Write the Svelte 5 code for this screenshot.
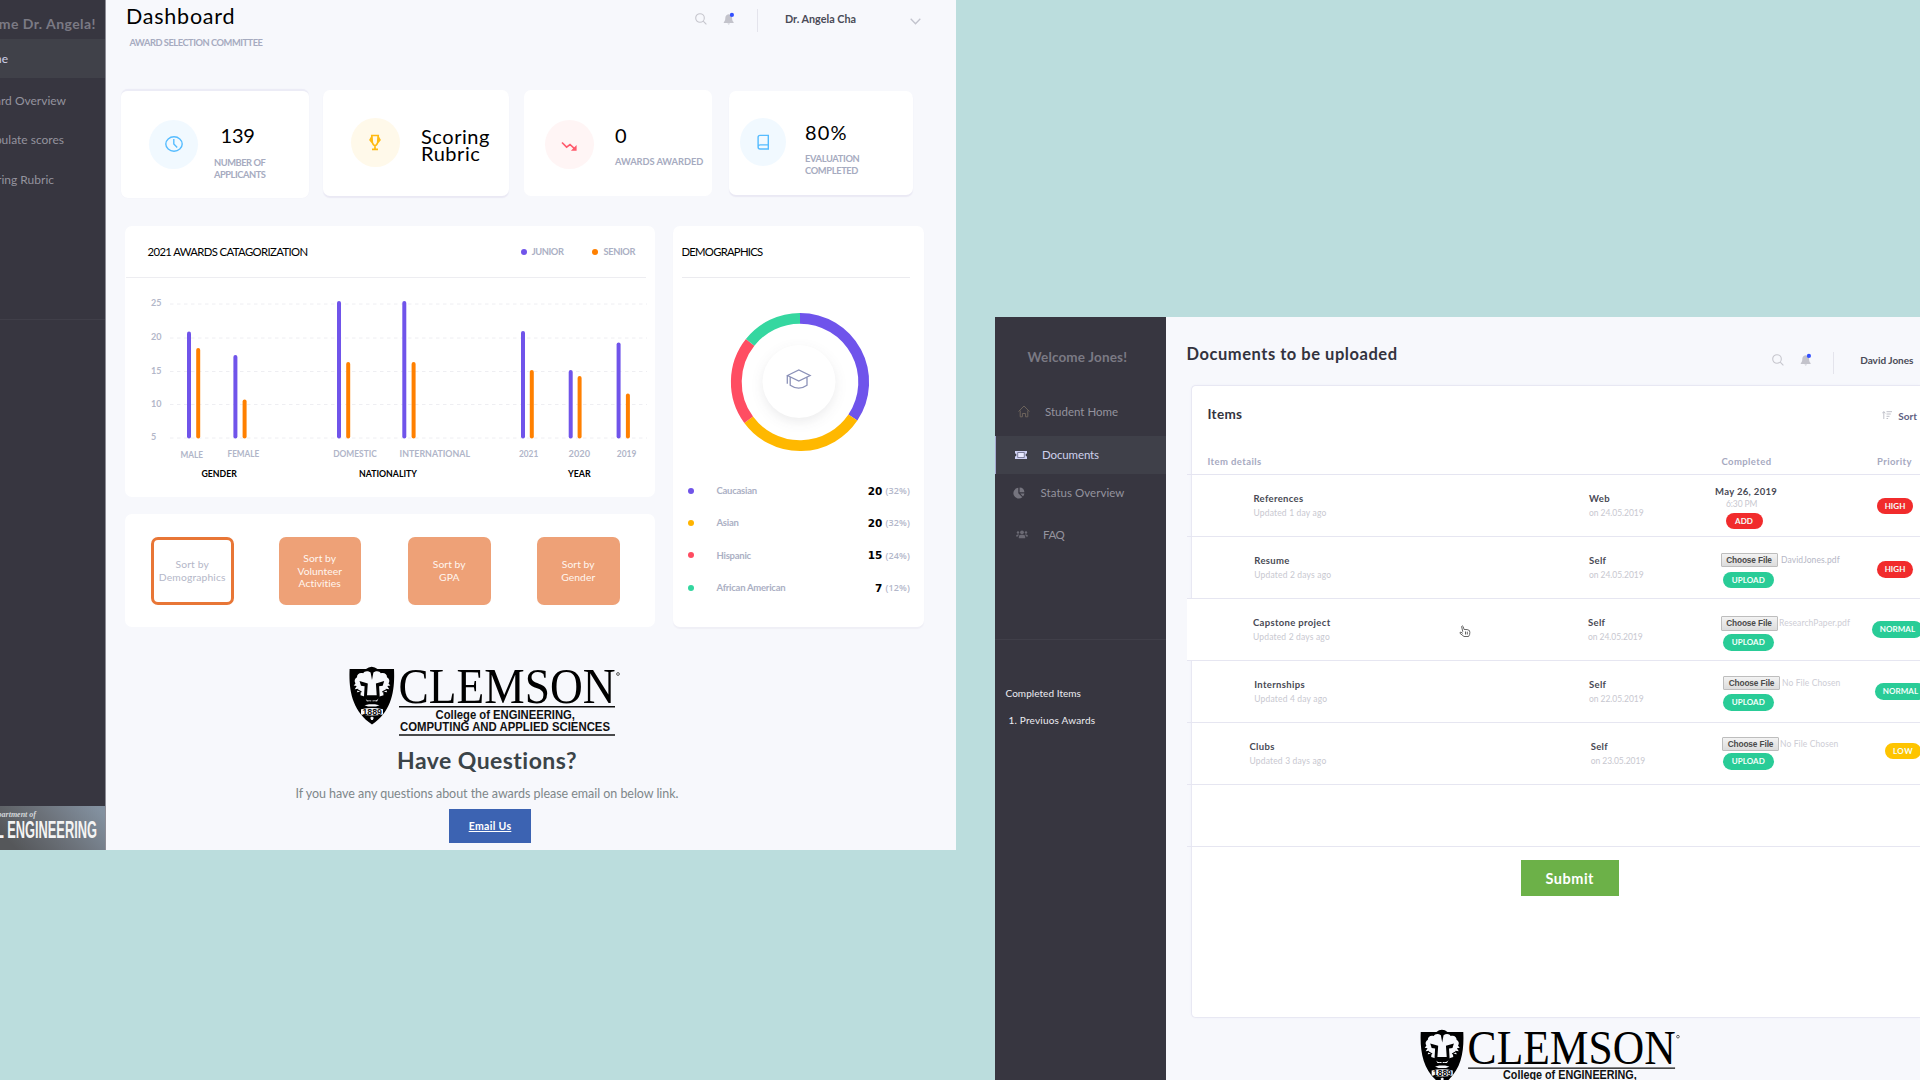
<script>
  const adminNav = ['Award Overview', 'Tabulate scores', 'Scoring Rubric'];

  const axis = [
    { v: 25, y: 78 }, { v: 20, y: 112 }, { v: 15, y: 145.5 }, { v: 10, y: 178.5 }, { v: 5, y: 212 }
  ];
  const bars = [
    { x: 64, top: 105.5, kind: 'junior' }, { x: 73.2, top: 122, kind: 'senior' },
    { x: 110.4, top: 129, kind: 'junior' }, { x: 119.6, top: 173.5, kind: 'senior' },
    { x: 214, top: 75, kind: 'junior' }, { x: 223.2, top: 136, kind: 'senior' },
    { x: 279.3, top: 75, kind: 'junior' }, { x: 288.6, top: 136, kind: 'senior' },
    { x: 398, top: 105, kind: 'junior' }, { x: 406.8, top: 144, kind: 'senior' },
    { x: 445.7, top: 144, kind: 'junior' }, { x: 454.6, top: 150, kind: 'senior' },
    { x: 493.6, top: 116.5, kind: 'junior' }, { x: 502.9, top: 167.5, kind: 'senior' }
  ];
  const groups = [
    { t: 'MALE', x: 55.4, y: 232, w: 22.5 }, { t: 'FEMALE', x: 102.5, y: 231, w: 31.8 },
    { t: 'DOMESTIC', x: 208.2, y: 231, w: 43.6 }, { t: 'INTERNATIONAL', x: 274.6, y: 231, w: 70.4 },
    { t: '2021', x: 394, y: 231, w: 19.2 }, { t: '2020', x: 443.6, y: 231, w: 21.4 }, { t: '2019', x: 491.8, y: 231, w: 19.6 }
  ];
  const titles = [
    { t: 'GENDER', x: 76.4, w: 35.4 }, { t: 'NATIONALITY', x: 234, w: 58 }, { t: 'YEAR', x: 443, w: 22.7 }
  ];

  const people = [
    { name: 'Caucasian', n: 20, pct: 32, color: '#7054e8' },
    { name: 'Asian', n: 20, pct: 32, color: '#ffb400' },
    { name: 'Hispanic', n: 15, pct: 24, color: '#ff4c61' },
    { name: 'African American', n: 7, pct: 12, color: '#33d69f' }
  ];
  const arcs = [
    { from: 0, to: 123.9, color: '#6f54eb' },
    { from: 123.9, to: 233.7, color: '#ffb800' },
    { from: 233.7, to: 308.5, color: '#ff4d62' },
    { from: 308.5, to: 360, color: '#35d7a0' }
  ];
  const R = 63.7;
  function point(deg) {
    const a = ((deg - 90) * Math.PI) / 180;
    return `${70 + R * Math.cos(a)} ${70 + R * Math.sin(a)}`;
  }

  const docs = [
    { name: 'References', ago: '1 day', x: 66.5, src: 'Web', date: '24.05.2019', sx: 402, pri: 'HIGH', px: 690, py: 23 },
    { name: 'Resume', ago: '2 days', x: 67.3, src: 'Self', date: '24.05.2019', sx: 402, file: 'DavidJones.pdf', fx: 0.5, fy: 16, gap: 4.5, sep: 3.5, tone: 'dark', pri: 'HIGH', px: 690, py: 24.5 },
    { name: 'Capstone project', ago: '2 days', x: 66, src: 'Self', date: '24.05.2019', sx: 401, file: 'ResearchPaper.pdf', fx: 0.5, fy: 17.5, gap: 3.5, sep: 1.5, pri: 'NORMAL', px: 685, py: 22.5 },
    { name: 'Internships', ago: '4 day', x: 67.3, src: 'Self', date: '22.05.2019', sx: 402, file: 'No File Chosen', fx: 3, fy: 15, gap: 4, sep: 2, pri: 'NORMAL', px: 688, py: 22.5 },
    { name: 'Clubs', ago: '3 days', x: 62.5, src: 'Self', date: '23.05.2019', sx: 403.7, file: 'No File Chosen', fx: 2, fy: 14, gap: 2, sep: 1, pri: 'LOW', px: 698, py: 20 }
  ];
</script>

{#snippet logo()}
  <svg class="logo" viewBox="0 0 272 72" aria-label="Clemson College of Engineering, Computing and Applied Sciences">
    <path d="M.6 3H17q2.500-2 5.700-2.200Q26 1 28.500 3h16.500C46 24 43 45 23 58.500 3 45-.4 24 .6 3Z" fill="#000" />
    <path d="M21.600 6.500 23 14l1.400-7.500c3-2.300 6.500-1.300 7.400.8 3.300-1.300 6.400.9 6.200 3.900 2.500 1.200 3 4.200 1.500 6.200l1.800 2.200-3 .4 2 3.200-3.600-.5 1.500 3.600-4-.6.3 3.500-4 1.300-2.500 5h-10l-2.500-5-4-1.300.3-3.500-4 .6 1.500-3.600-3.600.5 2-3.200-3-.4 1.800-2.200c-1.500-2-1-5 1.500-6.200-.2-3 2.900-5.200 6.200-3.900.9-2.100 4.400-3.100 7.400-.8Z" fill="#f7f8fc" />
    <path d="m10.500 15 8.300 2.600-.8 11.600h9.700l-.8-11.600 8.300-2.600-1.500 4.700-3.600.6.700 11.800-3.800 2.400h-8.300l-3.800-2.400.7-11.800-3.600-.6Z" fill="#000" />
    <path d="M8 23.500l4.500 2.500M37.800 23.500l-4.500 2.500M22.900 33.500v3M16 36.800l4.500-.9 2.400.6 2.400-.6 4.500.9" stroke="#000" stroke-width="1.200" fill="none" />
    <path d="M15.500 39.200q2.700-.3 4.500-1h6q1.800.7 4.500 1l-3.500 1.400H19Z" fill="#f7f8fc" />
    <path d="M12 43.200q11-2.500 22 0v5.300q-11 2-22 0Z" fill="#f7f8fc" />
    <text x="13.500" y="48.600" textLength="19.500" lengthAdjust="spacingAndGlyphs" class="year">1889</text>
    <path d="m21.200 51.800 1.800-1.300 1.800 1.300-1 2.200h-1.600Z" fill="#f7f8fc" />
    <text x="49.500" y="37" textLength="217" lengthAdjust="spacingAndGlyphs" class="wordmark">CLEMSON</text>
    <circle cx="269" cy="8" r="1.400" fill="none" stroke="#333" stroke-width=".8" />
    <path d="M50 40.800h216M50 69h216" stroke="#111" stroke-width="1.500" />
    <text x="86.500" y="52.500" textLength="139.500" lengthAdjust="spacingAndGlyphs" class="school">College of ENGINEERING,</text>
    <text x="51" y="65" textLength="210" lengthAdjust="spacingAndGlyphs" class="school">COMPUTING AND APPLIED SCIENCES</text>
  </svg>
{/snippet}

{#snippet searchIcon()}
  <svg class="search" viewBox="0 0 12 12"><circle cx="5" cy="5" r="4.300" /><path d="m8.200 8.200 3.200 3.200" /></svg>
{/snippet}

{#snippet bellIcon()}
  <svg class="bell" viewBox="0 0 13 14">
    <path d="M5.500 2.200c-2.300.4-3.200 2-3.200 4 0 2-.6 3-1.500 3.800v1h9.800v-1c-.9-.8-1.500-1.800-1.500-3.800 0-2-1-3.600-3.600-4ZM4.400 11.600q1.300 2 2.600 0Z" fill="#c3c3cb" />
    <circle cx="8.900" cy="2.900" r="2.100" fill="#3350ff" />
  </svg>
{/snippet}

<div class="desktop">
  <section class="window admin">
    <aside>
      <h2>Welcome Dr. Angela!</h2>
      <a class="active" href="#home">Home</a>
      {#each adminNav as item}<a href="#{item}">{item}</a>{/each}
      <hr />
      <svg class="dept" viewBox="0 0 105 44">
        <defs>
          <linearGradient id="steel" x1="0" y1=".6" x2="1" y2=".2">
            <stop offset="0" stop-color="#55575a" /><stop offset=".5" stop-color="#6c727a" /><stop offset="1" stop-color="#8391a0" />
          </linearGradient>
        </defs>
        <rect width="105" height="44" fill="url(#steel)" />
        <text x="36" y="11" text-anchor="end" class="dep">Department of</text>
        <text x="97" y="32" text-anchor="end" textLength="126" lengthAdjust="spacingAndGlyphs" class="eng">CIVIL ENGINEERING</text>
      </svg>
    </aside>

    <main>
      <header>
        <div>
          <h1>Dashboard</h1>
          <p class="cap">AWARD SELECTION COMMITTEE</p>
        </div>
        <div class="tools">
          {@render searchIcon()}
          {@render bellIcon()}
          <i class="rule"></i>
          <span class="user">Dr. Angela Cha</span>
          <svg class="chev" viewBox="0 0 11 7"><path d="m.7.8 4.800 5 4.800-5" /></svg>
        </div>
      </header>

      <div class="stats">
        <article class="card one">
          <div class="disc blue">
            <svg viewBox="0 0 20 20" width="20" height="20"><ellipse cx="10" cy="10" rx="8.200" ry="7.200" /><path d="M9.800 5v5l3.400 3.600" /></svg>
          </div>
          <div class="info"><strong>139</strong><span class="cap">NUMBER OF<br />APPLICANTS</span></div>
        </article>
        <article class="card two">
          <div class="disc gold">
            <svg viewBox="0 0 20 20" width="20" height="20"><path d="M6.800 3.500h6.400l-.5 7q-.7 2.500-2.700 3.500-2-1-2.700-3.500ZM6.800 5l-1.700 3 2.200 2.800M13.200 5l1.700 3-2.200 2.800M10 14v3.200M7 17.400h6" /></svg>
          </div>
          <div class="info"><strong>Scoring<br />Rubric</strong></div>
        </article>
        <article class="card three">
          <div class="disc rose">
            <svg viewBox="0 0 20 20" width="20" height="20"><path d="m3 7.500 4.600 4.600 3.400-2.600 5 4.700M13.800 15h3v-3Z" /></svg>
          </div>
          <div class="info"><strong>0</strong><span class="cap">AWARDS AWARDED</span></div>
        </article>
        <article class="card four">
          <div class="disc blue">
            <svg viewBox="0 0 20 20" width="20" height="20"><path d="M15.300 17H7q-1.900 0-1.900-2V5.300q0-1.900 1.900-1.900h8.300ZM5.200 14.500q.2-1.600 2-1.600h8" /></svg>
          </div>
          <div class="info"><strong>80%</strong><span class="cap">EVALUATION<br />COMPLETED</span></div>
        </article>
      </div>

      <div class="panels">
        <div class="left">
          <section class="panel chart">
            <div class="head">
              <h3>2021 AWARDS CATAGORIZATION</h3>
              <span class="key junior">JUNIOR</span>
              <span class="key senior">SENIOR</span>
            </div>
            <svg viewBox="0 51 530 219" width="530" height="219">
              <path d="M1 51.500h520" stroke="#ededf1" stroke-width="1.200" />
              {#each axis as a}
                <path d="M45 {a.y}h477" stroke="#eeeef2" stroke-dasharray="3.500 3.500" />
                <text x="26" y={a.y + 2.2} class="tick">{a.v}</text>
              {/each}
              {#each bars as b}
                <rect x={b.x - 2} y={b.top} width="4" height={212.5 - b.top} rx="2" fill={b.kind === 'junior' ? '#7054ea' : '#ff8000'} />
              {/each}
              {#each groups as g}
                <text x={g.x} y={g.y} textLength={g.w} lengthAdjust="spacingAndGlyphs" class="group">{g.t}</text>
              {/each}
              {#each titles as g}
                <text x={g.x} y="251" textLength={g.w} lengthAdjust="spacingAndGlyphs" class="group strong">{g.t}</text>
              {/each}
            </svg>
          </section>
          <section class="panel sorts">
            <button class="on">Sort by<br />Demographics</button>
            <button class="s2">Sort by<br />Volunteer<br />Activities</button>
            <button class="s3">Sort by<br />GPA</button>
            <button class="s4">Sort by<br />Gender</button>
          </section>
        </div>

        <section class="panel demo">
          <h3>DEMOGRAPHICS</h3>
          <div class="donut">
            <svg viewBox="0 0 140 140" width="140" height="140">
              {#each arcs as a}
                <path d="M{point(a.from)}A{R} {R} 0 0 1 {point(a.to)}" stroke={a.color} stroke-width="10.800" fill="none" />
              {/each}
              <circle class="hub" cx="69" cy="69.500" r="36.500" />
              <path d="m57.500 63.500 11.300-5.600 11.300 5.600-11.300 5.600ZM60.200 65v8.200q8.500 5.800 16.800 0V65M57.300 63.500v8.300" stroke="#8b91b8" stroke-width="1.300" fill="none" />
            </svg>
          </div>
          <ul>
            {#each people as p}
              <li>
                <svg width="6" height="6"><circle cx="3" cy="3" r="3" fill={p.color} /></svg>
                <span class="name">{p.name}</span>
                <b>{p.n}</b><span class="pct">({p.pct}%)</span>
              </li>
            {/each}
          </ul>
        </section>
      </div>

      <footer>
        {@render logo()}
        <h2>Have Questions?</h2>
        <p>If you have any questions about the awards please email on below link.</p>
        <a href="#mail">Email Us</a>
      </footer>
    </main>
  </section>

  <section class="window student">
    <aside>
      <h2>Welcome Jones!</h2>
      <a class="n1" href="#home">
        <svg viewBox="0 0 12 13" width="12" height="13"><path d="M.6 6.500 6 1l5.400 5.500M2.200 5.500v6.300h2.200V8.500h3.200v3.300h2.200V5.500" fill="none" stroke="#6d645c" /></svg>
        <span>Student Home</span>
      </a>
      <a class="n2 active" href="#documents">
        <svg viewBox="0 0 12 8" width="12" height="8"><path d="M0 0h12v2.600a1.400 1.400 0 0 0 0 2.800V8H0V5.400a1.400 1.400 0 0 0 0-2.800Z" fill="#cfd1f3" /><path d="M2.700 1.500h6.600v5H2.700Z" fill="#e9eaff" stroke="#555873" stroke-width=".7" /></svg>
        <span>Documents</span>
      </a>
      <a class="n3" href="#status">
        <svg viewBox="0 0 12 12" width="12" height="12"><path d="M5.300.8v5.500l4 4A5.400 5.400 0 1 1 5.300.8ZM6.600.6a5 5 0 0 1 4.800 4.700H6.600ZM7.200 6.500h4.200a5 5 0 0 1-1.400 3Z" fill="#75747e" /></svg>
        <span>Status Overview</span>
      </a>
      <a class="n4" href="#faq">
        <svg viewBox="0 0 12 9" width="12" height="9"><g fill="#6b6a74"><circle cx="6" cy="2.300" r="1.900" /><circle cx="2" cy="2.500" r="1.200" /><circle cx="10" cy="2.500" r="1.200" /><path d="M2.800 8.300V7q0-2.200 2-2.200h2.400q2 0 2 2.200v1.300ZM0 6.500q0-2 1.600-2h1.600Q2 5.400 2 6.500ZM12 6.500q0-2-1.600-2H8.800q1.200.9 1.200 2Z" /></g></svg>
        <span>FAQ</span>
      </a>
      <hr />
      <p>Completed Items</p>
      <p class="second">1. Previuos Awards</p>
    </aside>

    <main>
      <header>
        <h1>Documents to be uploaded</h1>
        <div class="tools">
          {@render searchIcon()}
          {@render bellIcon()}
          <i class="rule"></i>
          <span class="user">David Jones</span>
        </div>
      </header>

      <section class="sheet">
        <div class="top">
          <h3>Items</h3>
          <span class="sort">
            <svg viewBox="0 0 11 8" width="11" height="8"><path d="M1.800 8V.8M.3 2.300 1.800.6l1.500 1.700M4.500.7H10M4.500 3h4.300M4.500 5.300h3M4.500 7.500h1.600" fill="none" stroke="#bfc0c9" /></svg>
            Sort
          </span>
        </div>
        <div class="cols">
          <span>Item details</span><span>Completed</span><span>Priority</span>
        </div>
        {#each docs as d, i}
          <div class="row" class:hover={i === 2}>
            <div class="cell what" style:padding-left="{d.x}px"><b>{d.name}</b><small>Updated {d.ago} ago</small></div>
            <div class="cell" style:padding-left="{d.sx - 401}px"><b>{d.src}</b><small class="date">on {d.date}</small></div>
            <div class="files" class:dated={!d.file} style:padding-top="{d.fy ?? 10}px">
              {#if d.file}
                <div class="pick" style:padding-left="{d.fx}px" style:gap="{d.sep}px">
                  <button>Choose File</button><span class={d.tone}>{d.file}</span>
                </div>
                <span class="pill up" style:margin-top="{d.gap}px">UPLOAD</span>
              {:else}
                <b>May 26, 2019</b>
                <small>6:30 PM</small>
                <span class="pill high">ADD</span>
              {/if}
            </div>
            <div class="prio" style:padding-left="{d.px - 685}px" style:padding-top="{d.py}px">
              <span class="pill {d.pri.toLowerCase()}">{d.pri}</span>
            </div>
          </div>
        {/each}
        <div class="row"></div>
        <button class="submit">Submit</button>
      </section>

      <div class="brand">{@render logo()}</div>
    </main>

    <svg class="cursor" viewBox="0 0 12 12">
      <path d="M3.800 6.800 2.600 1.500q.8-1.200 1.500 0l1 3q3.500-.4 5.300 1 .8 1.500.2 4l-1 2H5L1 8.300q-.3-1.400 1-1.100l1.800 1.200M6.500 6.500v3M8.300 6.700v2.800" />
    </svg>
  </section>
</div>

<style>
  :global(body) { background: #bbdddd; }
  .desktop {
    position: relative; width: 1920px; height: 1080px; overflow: hidden;
    background: #bbdddd; font-family: Lato, 'Open Sans', sans-serif; color: #000;
  }
  h1, h2, h3, p, ul { margin: 0; padding: 0; }
  a { text-decoration: none; }
  button { border: 0; padding: 0; margin: 0; font-family: inherit; }
  svg { display: block; flex: none; }
  .window { position: absolute; display: flex; overflow: hidden; background: #f7f8fc; }
  .window main { flex: 1; display: flex; flex-direction: column; min-width: 0; }
  .window main > * { flex: none; }
  aside { display: flex; flex-direction: column; flex: none; box-sizing: border-box; background: #373640; }
  aside hr { width: 100%; height: 1px; border: 0; margin: 0; background: #403f49; }

  .tools { display: flex; align-items: flex-start; }
  .search { width: 12px; height: 12px; fill: none; stroke: #c6c6cd; stroke-width: 1.1; }
  .bell { width: 13px; height: 14px; }
  .rule { width: 1px; background: #e4e4ec; }
  .cap { font-size: 9.3px; font-weight: 700; color: #a6abc0; }

  /* Committee window */
  .admin { left: 0; top: 0; width: 956px; height: 850px; }
  .admin aside { width: 106px; border-right: 1px solid #8d8d96; align-items: stretch; white-space: nowrap; }
  .admin aside h2 {
    display: flex; justify-content: flex-end; height: 39px; box-sizing: border-box; padding: 14px 9px 0 0;
    font-size: 14px; line-height: 20px; font-weight: 700; letter-spacing: .45px; color: #7b7a84;
  }
  .admin aside a {
    display: flex; justify-content: flex-end; height: 39.400px; line-height: 20px; padding-right: 41px;
    font-size: 12px; color: #94939e;
  }
  .admin aside a.active { height: 39px; line-height: 39.500px; margin-bottom: 13px; padding-right: 97px; background: #404149; color: #d0d1ea; }
  .admin aside a:nth-of-type(2) { padding-right: 39px; }
  .admin aside a:nth-of-type(4) { padding-right: 51px; }
  .admin aside hr { margin-top: 110px; }
  .dept { margin-top: auto; width: 105px; height: 44px; }
  .dep { font: italic 700 8px 'Liberation Serif', serif; fill: #d3d6da; }
  .eng { font: 700 23.500px 'Liberation Sans', sans-serif; fill: #f4f4f4; }

  .admin header { display: flex; justify-content: space-between; height: 89px; padding: 0 35px 0 20px; }
  .admin h1 { padding-top: 2px; font-size: 21.500px; line-height: 28px; font-weight: 400; letter-spacing: .76px; }
  .admin header .cap { margin: 6px 0 0 3.500px; line-height: 14px; letter-spacing: -.47px; }
  .admin .search { margin-top: 12.500px; }
  .admin .bell { margin: 11.500px 21px 0 16px; }
  .admin .rule { margin-top: 9px; height: 23px; }
  .user { font-size: 10.800px; line-height: 20px; font-weight: 700; color: #4a4b57; }
  .admin .user { margin: 9px 54px 0 27px; }
  .chev { width: 11px; height: 7px; margin-top: 17.500px; fill: none; stroke: #c2c3cd; stroke-width: 1.3; }

  .stats { display: flex; align-items: flex-start; height: 137px; padding-left: 15px; box-sizing: border-box; }
  .card { display: flex; box-sizing: border-box; background: #fff; border-radius: 7px; }
  .one { width: 187.500px; height: 108.500px; border-top: 2px solid #ececf6; padding: 28.500px 0 0 28px; box-shadow: 0 0 1px #ececf6; }
  .two { width: 186px; height: 106px; margin: 1px 0 0 14px; padding: 27.500px 0 0 28px; box-shadow: 0 1.500px 1px #eae9f4; }
  .three { width: 188px; height: 106px; margin: 1px 0 0 15.500px; padding: 30px 0 0 20.500px; }
  .four { width: 183.500px; height: 104px; margin: 2px 0 0 17px; padding: 27px 0 0 10.500px; box-shadow: 0 1.500px 1px #eae9f4; }
  .disc { display: grid; place-items: center; width: 49px; height: 49px; border-radius: 50%; flex: none; }
  .disc svg { fill: none; stroke-width: 1.4; }
  .four .disc { width: 46px; height: 48px; }
  .blue { background: #f1f9ff; }
  .blue svg { stroke: #56bcff; }
  .gold { background: #fff9ea; }
  .gold svg { stroke: #ffba12; stroke-width: 1.7; }
  .rose { background: #fff5f5; }
  .rose svg { stroke: #ff5a6c; stroke-width: 1.6; }
  .info { display: flex; flex-direction: column; white-space: nowrap; }
  .info strong { font-size: 20px; line-height: 17px; font-weight: 400; }
  .info .cap { line-height: 12.600px; }
  .one .info { padding: 7.500px 0 0 16px; }
  .one strong { padding-left: 6.500px; letter-spacing: -.2px; }
  .one .cap { margin-top: 12.500px; letter-spacing: -.45px; }
  .two .info { padding: 10px 0 0 21.500px; }
  .two strong { letter-spacing: .55px; }
  .three .info { padding: 7.300px 0 0 21.500px; }
  .three .cap { margin-top: 11.500px; letter-spacing: -.07px; }
  .four .info { padding: 6px 0 0 19.500px; }
  .four strong { letter-spacing: 1.1px; }
  .four .cap { margin-top: 11.800px; letter-spacing: -.35px; }

  .panels { display: flex; gap: 18px; height: 401px; padding-left: 19px; }
  .left { display: flex; flex-direction: column; justify-content: space-between; width: 530px; }
  .panel { box-sizing: border-box; background: #fff; border-radius: 7px; }
  .chart { height: 270.500px; }
  .head { display: flex; align-items: center; height: 51px; padding: 0 20px 0 22.500px; }
  h3 { font-weight: 400; }
  .head h3 { font-size: 11.300px; letter-spacing: -.61px; margin-right: auto; }
  .key { display: flex; align-items: center; gap: 4.500px; font-size: 9.300px; font-weight: 700; letter-spacing: -.4px; color: #abb0c4; }
  .key::before { content: ''; width: 6px; height: 6px; border-radius: 50%; background: #7054ea; }
  .senior { margin-left: 28px; }
  .senior::before { background: #ff8000; margin-right: 1.500px; }
  .tick { font: 700 9px Lato, sans-serif; fill: #b3b7c9; }
  .group { font: 700 9.500px Lato, sans-serif; fill: #b0b5c8; }
  .strong { fill: #000; }
  .sorts { display: flex; height: 113px; padding: 23px 0 0 26px; }
  .sorts button {
    width: 82.500px; height: 68px; border-radius: 7px; background: #eea177; color: #fff6f0;
    font-size: 10.300px; line-height: 12.600px; letter-spacing: .05px; white-space: nowrap;
  }
  .sorts .on { background: #fff; border: 3px solid #e87636; color: #b4b7c8; letter-spacing: .15px; }
  .s2 { margin-left: 45px; }
  .s3 { margin-left: 47px; }
  .s4 { margin-left: 46.500px; }

  .demo { width: 251px; display: flex; flex-direction: column; box-shadow: 0 1.500px 1px #efeff6; }
  .demo h3 { height: 50.500px; margin: 0 14.500px 0 8.500px; font-size: 11.300px; line-height: 52px; letter-spacing: -.75px; border-bottom: 1px solid #ebebef; }
  .donut { padding: 34px 0 0 56.500px; height: 196px; box-sizing: border-box; }
  .hub { fill: #fff; filter: drop-shadow(0 4px 6px rgba(40, 40, 60, .09)); }
  .demo ul { list-style: none; padding: 1px 14px 0 15px; }
  .demo li { display: flex; align-items: center; height: 32.300px; font-size: 9.500px; }
  .name { margin: 0 auto 0 22.500px; font-weight: 700; letter-spacing: -.25px; color: #abb0c4; }
  .demo b { font-family: 'DejaVu Sans', sans-serif; font-size: 10.500px; letter-spacing: .1px; margin-right: 3px; }
  .pct { font-family: 'Open Sans', Lato, sans-serif; font-size: 9px; font-weight: 600; color: #b3b7ca; letter-spacing: .15px; }

  footer { display: flex; flex-direction: column; align-items: center; width: 762px; padding-top: 39px; }
  .logo { width: 272px; height: 72px; }
  footer .logo { margin-right: 4px; }
  .year { font: 700 8.500px 'Liberation Sans', sans-serif; fill: #111; }
  .wordmark { font: 51px 'Liberation Serif', serif; fill: #000; }
  .school { font: 700 12.500px 'Liberation Sans', sans-serif; fill: #111; }
  footer h2 { margin-top: 6px; font-size: 23px; line-height: 32px; letter-spacing: .45px; color: #3b4448; }
  footer p { margin-top: 7.500px; font-size: 12.500px; line-height: 20px; letter-spacing: -.04px; color: #7e878a; white-space: nowrap; }
  footer a {
    width: 82.500px; height: 34px; margin: 5px 0 0 6px; background: #3c63b2; color: #fff; text-align: center;
    font-size: 10.500px; line-height: 34px; font-weight: 700; letter-spacing: .33px; text-decoration: underline;
  }

  /* Student window */
  .student { left: 995px; top: 317px; width: 925px; height: 763px; }
  .student aside { width: 171px; }
  .student aside h2 { height: 77px; box-sizing: border-box; padding: 30px 0 0 32.500px; font-size: 13.500px; line-height: 20px; letter-spacing: .16px; color: #7b7a84; white-space: nowrap; }
  .student aside a { display: flex; align-items: center; box-sizing: border-box; font-size: 11.500px; color: #94939e; }
  .n1 { height: 35px; padding-left: 23px; }
  .n1 span { margin-left: 15px; }
  .n2 { height: 37.500px; margin-top: 7px; padding-left: 18.500px; border-left: 1.500px solid #a5a8d0; }
  .n2 span { margin-left: 15.500px; letter-spacing: -.12px; }
  .student aside .active { background: #3f4049; color: #cfd1ec; }
  .n3 { height: 38px; padding-left: 18px; }
  .n3 span { margin-left: 15.500px; letter-spacing: .05px; }
  .n4 { height: 46px; padding-left: 21px; }
  .n4 span { margin-left: 15px; letter-spacing: -.4px; }
  .student aside hr { margin-top: 81.500px; }
  .student aside p { margin: 42.500px 0 0 10.500px; font-size: 10px; line-height: 20px; letter-spacing: .05px; color: #ededf2; white-space: nowrap; }
  .student aside .second { margin: 7px 0 0 13.500px; letter-spacing: .2px; }

  .student header { display: flex; justify-content: space-between; height: 67.500px; padding: 0 6.500px 0 20.500px; }
  .student h1 { padding-top: 26.500px; height: 20px; font-size: 16.500px; line-height: 20px; letter-spacing: .53px; color: #33333e; }
  .student .search { margin-top: 37px; }
  .student .bell { margin: 35.500px 20px 0 15.500px; }
  .student .rule { margin-top: 35px; height: 21.500px; }
  .student .user { margin: 33px 0 0 26.500px; font-size: 10px; }

  .sheet { height: 633px; margin-left: 25px; box-sizing: border-box; background: #fff; border: 1px solid #e8e8f3; border-left-width: 1.500px; border-right: 0; border-radius: 5px 0 0 5px; box-shadow: 0 0 2px #ededf6; }
  .top { display: flex; justify-content: space-between; height: 64px; padding: 18.500px 3px 0 15.500px; box-sizing: border-box; color: #33333e; }
  .top h3 { font-size: 13.500px; line-height: 20px; font-weight: 700; letter-spacing: .3px; }
  .sort { display: flex; gap: 5px; align-items: center; height: 20px; margin-top: 1.500px; font-size: 10px; font-weight: 700; color: #5f6182; }
  .sort svg { margin-bottom: 2px; }
  .cols { display: grid; grid-template-columns: 514px 155.500px 1fr; height: 24px; margin-left: -5px; padding-left: 20.500px; line-height: 23px; font-size: 9.500px; font-weight: 700; letter-spacing: .4px; color: #a6a9bf; border-bottom: 1.500px solid #e5e5f1; }
  .row { display: grid; grid-template-columns: 401px 132px 152px 1fr; box-sizing: border-box; height: 62px; margin-left: -5px; border-bottom: 1px solid #e6e6f1; white-space: nowrap; }
  .hover { background: #fff; }
  .cell { display: flex; flex-direction: column; padding-top: 17px; }
  .row b { font-size: 9.500px; line-height: 14px; letter-spacing: .33px; color: #484954; font-weight: 700; }
  .row small { font-size: 8.500px; line-height: 14.500px; letter-spacing: .17px; color: #c8c8d0; }
  .row .date { letter-spacing: -.05px; }
  .files { display: flex; flex-direction: column; align-items: flex-start; }
  .dated b { margin-left: -5px; line-height: 13px; }
  .dated small { margin-left: 6px; line-height: 13px; letter-spacing: -.1px; }
  .dated .pill { margin: 2px 0 0 5.500px; width: 37px; }
  .pick { display: flex; align-items: center; height: 14.500px; }
  .pick button {
    width: 57px; height: 14.500px; box-sizing: border-box; border: 1px solid #bdbdbd; border-radius: 1px;
    background: linear-gradient(#f3f3f3, #dcdcdc); font: 700 8.300px/12px 'Liberation Sans', sans-serif; letter-spacing: -.12px; color: #4a4a4a;
  }
  .pick span { font-size: 8.500px; letter-spacing: .1px; color: #cdcdd5; }
  .pick .dark { color: #b6b7c6; }
  .pill {
    display: block; height: 16.500px; border-radius: 9px; background: #29cc97; color: #f4fffb; text-align: center;
    font-size: 8px; line-height: 16.500px; font-weight: 700; letter-spacing: .05px;
  }
  .up { width: 51.500px; margin-left: 2.500px; }
  .prio .pill { width: 36px; }
  .pill.high { background: #f12b2c; }
  .prio .normal { width: 51px; }
  .prio .low { background: #fec400; letter-spacing: .5px; }
  .submit { display: block; width: 98.500px; height: 36px; margin: 13.500px 0 0 328.500px; background: #6cb148; color: #fff; font-size: 14.500px; font-weight: 700; letter-spacing: .5px; }

  .brand { padding: 11px 0 0 254px; }
  .brand .logo { width: 261px; height: 69px; }
  .cursor { position: absolute; left: 464px; top: 308px; width: 12px; height: 12px; fill: #fff; stroke: #555; stroke-width: .9; }
</style>
